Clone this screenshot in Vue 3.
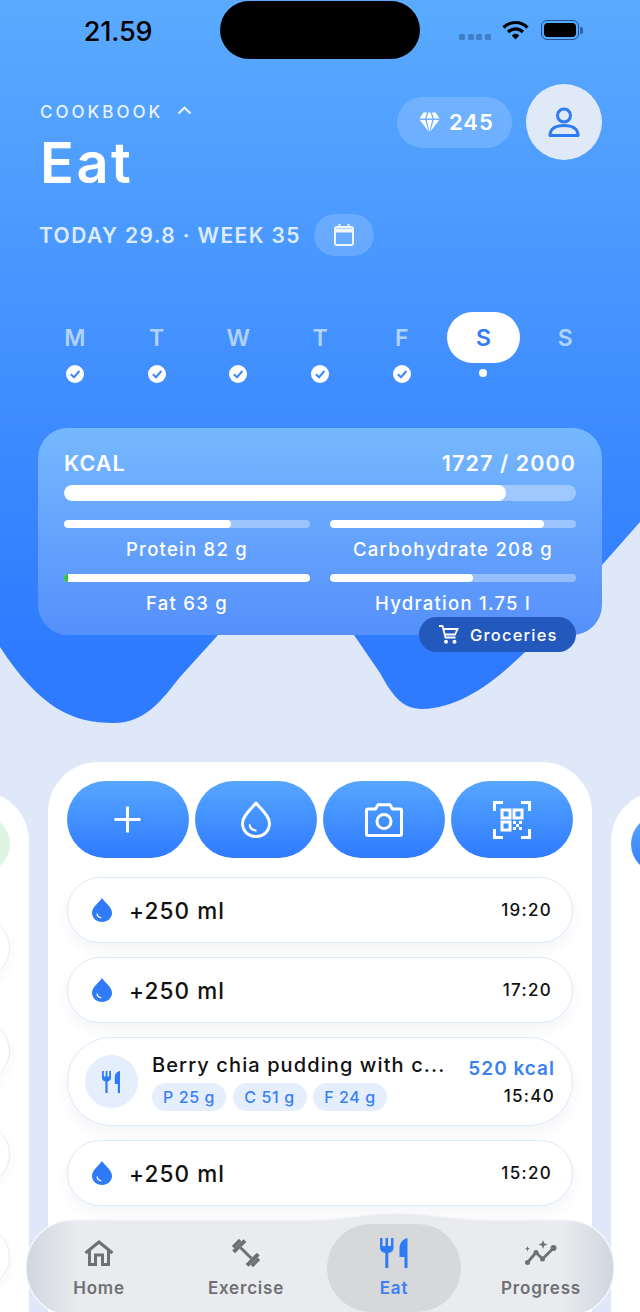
<script setup>
const days = [
  { label: 'M', done: true },
  { label: 'T', done: true },
  { label: 'W', done: true },
  { label: 'T', done: true },
  { label: 'F', done: true },
  { label: 'S', today: true },
  { label: 'S' },
]

const macros = [
  { label: 'Protein 82 g', pct: 68 },
  { label: 'Carbohydrate 208 g', pct: 87 },
  { label: 'Fat 63 g', pct: 100, over: true },
  { label: 'Hydration 1.75 l', pct: 58 },
]

const entries = [
  { type: 'water', time: '19:20' },
  { type: 'water', time: '17:20' },
  { type: 'food', title: 'Berry chia pudding with c...', kcal: '520 kcal', time: '15:40', chips: ['P 25 g', 'C 51 g', 'F 24 g'] },
  { type: 'water', time: '15:20' },
  { type: 'water', time: '13:20' },
]

const navItems = ['Home', 'Exercise', 'Eat', 'Progress']
</script>

<template>
  <div class="screen">
    <svg class="blob" width="640" height="730" viewBox="0 0 640 730">
      <defs>
        <linearGradient id="heroFill" x1="0" y1="0" x2="0" y2="1">
          <stop offset="0" stop-color="#5aaaff" />
          <stop offset="0.9" stop-color="#2e7bff" />
          <stop offset="1" stop-color="#2e7bff" />
        </linearGradient>
      </defs>
      <path
        fill="url(#heroFill)"
        d="M0 0H640V522L602 565L524 653C490 686 458 708 422 709C402 709 392 695 380 673L354 635H218L180 677C162 700 145 723 114 723C72 723 40 708 0 647Z"
      />
    </svg>

    <div class="status">
      <span class="clock">21.59</span>
      <div class="island"></div>
      <div class="status-right">
        <div class="signal"><i></i><i></i><i></i><i></i></div>
        <svg width="27" height="20" viewBox="0 0 27 20">
          <path d="M1.500 7.500C8.500 0.800 18.500 0.800 25.500 7.500" fill="none" stroke="#000" stroke-width="3.200" />
          <path d="M6 12C10.500 7.800 16.500 7.800 21 12" fill="none" stroke="#000" stroke-width="3.200" />
          <path d="M9.800 15.500C12 13.200 15 13.200 17.200 15.500L13.500 19.500Z" fill="#000" />
        </svg>
        <div class="battery"><div class="battery-in"></div></div>
        <div class="battery-nub"></div>
      </div>
    </div>

    <header class="top">
      <div class="top-left">
        <div class="crumb">
          <span>COOKBOOK</span>
          <svg width="15" height="9" viewBox="0 0 15 9">
            <path d="M1.500 7.500L7.500 1.800L13.500 7.500" fill="none" stroke="#e8f1ff" stroke-width="2.200" />
          </svg>
        </div>
        <h1>Eat</h1>
      </div>
      <div class="top-right">
        <div class="gems">
          <svg width="21" height="20" viewBox="0 0 21 20" fill="#fff">
            <path d="M4.500 0.500H8L6 6.500H0.500Z" />
            <path d="M9.500 0.500H11.500L13.500 6.500H7.500Z" />
            <path d="M13 0.500H16.500L20.500 6.500H15Z" />
            <path d="M0.800 8H6.200L9.700 19.500Z" />
            <path d="M7.800 8H13.200L10.500 19.800Z" />
            <path d="M14.800 8H20.200L11.300 19.500Z" />
          </svg>
          <span>245</span>
        </div>
        <div class="avatar">
          <svg width="32" height="31" viewBox="0 0 32 31" fill="none" stroke="#2f7bf6" stroke-width="3">
            <circle cx="16" cy="8.500" r="6.500" />
            <path d="M2 28.500C2 21.500 8 18.500 16 18.500C24 18.500 30 21.500 30 28.500Z" stroke-linejoin="round" />
          </svg>
        </div>
      </div>
    </header>

    <div class="date-row">
      <span>TODAY 29.8 · WEEK 35</span>
      <div class="cal-btn">
        <svg width="20" height="22" viewBox="0 0 20 22" fill="none" stroke="#f0f6ff" stroke-width="2">
          <rect x="1" y="3" width="18" height="18" rx="2" />
          <path d="M1 6.500H19" stroke-width="4" />
          <path d="M5.500 0V3M14.500 0V3" />
        </svg>
      </div>
    </div>

    <div class="week">
      <div v-for="(d, i) in days" :key="i" class="day">
        <div :class="['day-label', { today: d.today }]">{{ d.label }}</div>
        <svg v-if="d.done" class="day-check" width="18" height="18" viewBox="0 0 18 18">
          <circle cx="9" cy="9" r="9" fill="#fff" />
          <path d="M4.800 9.200L8 12.200L13.400 6" fill="none" stroke="#3d87f8" stroke-width="2" />
        </svg>
        <div v-if="d.today" class="day-dot"></div>
      </div>
    </div>

    <section class="summary">
      <div class="kcal-head">
        <span>KCAL</span>
        <span>1727 / 2000</span>
      </div>
      <div class="track big"><div class="fill" style="width: 86.400%"></div></div>
      <div class="macros">
        <div v-for="m in macros" :key="m.label" class="macro">
          <div class="track small">
            <div class="fill" :style="{ width: m.pct + '%' }"></div>
            <div v-if="m.over" class="over"></div>
          </div>
          <div class="macro-label">{{ m.label }}</div>
        </div>
      </div>
      <div class="groceries">
        <svg width="20" height="19" viewBox="0 0 20 19" fill="none" stroke="#fff" stroke-width="1.800">
          <path d="M0 1H3.500L6.500 12.500H16.500" />
          <path d="M4.300 4H18.500L16 9.500H6" />
          <circle cx="7" cy="16.800" r="1.100" fill="#fff" />
          <circle cx="15.500" cy="16.800" r="1.100" fill="#fff" />
        </svg>
        <span>Groceries</span>
      </div>
    </section>

    <div class="carousel">
      <div class="side-card left">
        <div class="side-btn green"></div>
        <div class="side-row"></div>
        <div class="side-row"></div>
        <div class="side-row"></div>
        <div class="side-row"></div>
      </div>

      <main class="card">
        <div class="actions">
          <button class="action">
            <svg width="27" height="27" viewBox="0 0 27 27" stroke="#fff" stroke-width="3">
              <path d="M0.500 13.500H26.500M13.500 0.500V26.500" />
            </svg>
          </button>
          <button class="action">
            <svg width="30" height="37" viewBox="0 0 30 37" fill="none" stroke="#fff" stroke-width="3">
              <path d="M15 2C20 8.500 28.500 14.500 28.500 22.500C28.500 30 22.500 35.500 15 35.500C7.500 35.500 1.500 30 1.500 22.500C1.500 14.500 10 8.500 15 2Z" stroke-linejoin="round" />
              <path d="M8.500 23.500C9 27 11.500 29.300 15.500 29.500" stroke-width="2" />
            </svg>
          </button>
          <button class="action">
            <svg width="38" height="34" viewBox="0 0 38 34" fill="none" stroke="#fff" stroke-width="3">
              <path d="M3 6H10.500L13 1.800H25L27.500 6H35C36 6 36.500 6.500 36.500 7.500V31C36.500 32 36 32.500 35 32.500H3C2 32.500 1.500 32 1.500 31V7.500C1.500 6.500 2 6 3 6Z" stroke-linejoin="round" />
              <circle cx="19" cy="18.500" r="7" />
            </svg>
          </button>
          <button class="action">
            <svg width="38" height="38" viewBox="0 0 38 38" fill="none" stroke="#fff" stroke-width="3">
              <path d="M1.500 10V1.500H10M28 1.500H36.500V10M1.500 28V36.500H10M28 36.500H36.500V28" />
              <rect x="9" y="9" width="8" height="8" />
              <rect x="21" y="9" width="8" height="8" />
              <rect x="9" y="21" width="8" height="8" />
              <path d="M20 20h3v3h-3zM26 20h3v3h-3zM23 23h3v3h-3zM20 26h3v3h-3zM26 26h3v3h-3z" fill="#fff" stroke="none" />
            </svg>
          </button>
        </div>

        <div class="entries">
          <div v-for="(e, i) in entries" :key="i" :class="['entry', e.type]">
            <template v-if="e.type === 'water'">
              <svg class="entry-drop" width="20" height="24" viewBox="0 0 20 24">
                <path d="M10 0C13 4.500 20 9 20 15C20 20 15.500 24 10 24C4.500 24 0 20 0 15C0 9 7 4.500 10 0Z" fill="#2f7bf6" />
                <path d="M5 15.500C5.300 18 6.800 19.500 9.300 19.800" fill="none" stroke="#fff" stroke-width="1.300" />
              </svg>
              <span class="entry-amount">+250 ml</span>
              <span class="entry-time">{{ e.time }}</span>
            </template>
            <template v-else>
              <div class="food-icon">
                <svg width="20" height="22" viewBox="0 0 20 22" fill="#2f7bf6">
                  <path d="M0 0H1.800V5.500H3.600V0H5.400V5.500H7.200V0H9V7C9 9 7.500 10 5.600 10.400V22H3.400V10.400C1.500 10 0 9 0 7Z" />
                  <path d="M18 0V22H15.800V13H12.800V6C12.800 3 15 0.500 18 0Z" />
                </svg>
              </div>
              <div class="food-main">
                <div class="food-title">{{ e.title }}</div>
                <div class="chips">
                  <span v-for="c in e.chips" :key="c" class="chip">{{ c }}</span>
                </div>
              </div>
              <div class="food-side">
                <span class="food-kcal">{{ e.kcal }}</span>
                <span class="food-time">{{ e.time }}</span>
              </div>
            </template>
          </div>
        </div>
      </main>

      <div class="side-card right">
        <div class="side-btn blue"></div>
      </div>
    </div>

    <nav class="tabbar">
      <svg class="tabbar-bg" width="590" height="104" viewBox="0 0 590 104">
        <defs>
          <linearGradient id="glass" x1="0" y1="0" x2="1" y2="0">
            <stop offset="0" stop-color="#cfd6e1" />
            <stop offset="0.09" stop-color="#e9ebee" />
            <stop offset="0.91" stop-color="#e9ebee" />
            <stop offset="1" stop-color="#cfd6e1" />
          </linearGradient>
        </defs>
        <path
          fill="url(#glass)"
          stroke="#f4f6f9"
          stroke-width="1.500"
          d="M50 8H290C320 8 340 1 372 1C405 1 425 8 465 8H540C568 8 589 28 589 56C589 84 568 104 540 104H50C22 104 1 84 1 56C1 28 22 8 50 8Z"
        />
      </svg>
      <div class="tab-pill"></div>
      <div v-for="n in navItems" :key="n" :class="['tab', { active: n === 'Eat' }]">
        <svg v-if="n === 'Home'" width="30" height="26" viewBox="0 0 30 26" fill="none" stroke="#6f7074" stroke-width="3">
          <path d="M1.500 13L15 2L28.500 13" />
          <path d="M5.500 10V24.500H11.500V15H18.500V24.500H24.500V10" />
        </svg>
        <svg v-else-if="n === 'Exercise'" width="30" height="30" viewBox="0 0 30 30" fill="#6f7074">
          <g transform="rotate(45 15 15)">
            <rect x="0" y="10" width="3.500" height="10" />
            <rect x="3.500" y="7" width="4" height="16" />
            <rect x="7.500" y="13.500" width="15" height="3" />
            <rect x="22.500" y="7" width="4" height="16" />
            <rect x="26.500" y="10" width="3.500" height="10" />
          </g>
        </svg>
        <svg v-else-if="n === 'Eat'" width="28" height="30" viewBox="0 0 28 30" fill="#2f7bf6">
          <path d="M0 0H2.500V8H5.500V0H8V8H11V0H13.500V10C13.500 13 11 14.500 8.300 15V30H5.300V15C2.500 14.500 0 13 0 10Z" />
          <path d="M27.500 0V30H24.500V19H19.500V10C19.500 5 23 0.800 27.500 0Z" />
        </svg>
        <svg v-else width="34" height="26" viewBox="0 0 34 26" fill="none" stroke="#6f7074" stroke-width="2.800">
          <path d="M3.500 22.500L12 12.500L18.500 19L29.500 8" stroke-linejoin="round" />
          <circle cx="3.500" cy="22.500" r="2.500" fill="#6f7074" stroke="none" />
          <circle cx="12" cy="12.500" r="2.500" fill="#6f7074" stroke="none" />
          <circle cx="18.500" cy="19" r="2.500" fill="#6f7074" stroke="none" />
          <circle cx="29.500" cy="8" r="3" fill="#6f7074" stroke="none" />
          <path d="M19 0L20.200 3.300L23.500 4.500L20.200 5.700L19 9L17.800 5.700L14.500 4.500L17.800 3.300Z" fill="#6f7074" stroke="none" />
          <path d="M3.500 6L4.200 8L6 8.700L4.200 9.400L3.500 11.400L2.800 9.400L1 8.700L2.800 8Z" fill="#6f7074" stroke="none" />
        </svg>
        <span>{{ n }}</span>
      </div>
    </nav>
  </div>
</template>

<style scoped>
.screen {
  position: relative;
  width: 640px;
  height: 1312px;
  overflow: hidden;
  background: #dfe8f8;
  font-family: Inter, 'Liberation Sans', sans-serif;
}

.blob {
  position: absolute;
  top: 0;
  left: 0;
}

.status,
.top,
.date-row,
.week,
.summary,
.carousel {
  position: relative;
}

.status {
  display: flex;
  align-items: center;
  height: 58px;
  padding-top: 1px;
}

.clock {
  width: 220px;
  padding-left: 16px;
  padding-top: 2px;
  box-sizing: border-box;
  text-align: center;
  font-size: 27px;
  font-weight: 500;
  letter-spacing: -0.200px;
  color: #000;
}

.island {
  width: 200px;
  height: 58px;
  border-radius: 29px;
  background: #000;
}

.status-right {
  display: flex;
  align-items: center;
  padding-left: 39px;
}

.signal {
  display: flex;
  gap: 2.500px;
  margin-top: 13px;
  margin-right: 11px;
}

.signal i {
  display: block;
  width: 6px;
  height: 6px;
  border-radius: 1.500px;
  background: #3f7fc8;
}

.battery {
  box-sizing: border-box;
  width: 38px;
  height: 20px;
  margin-left: 12px;
  padding: 2px;
  border: 1.500px solid #20508f;
  border-radius: 6px;
}

.battery-in {
  height: 100%;
  border-radius: 4px;
  background: #000;
}

.battery-nub {
  width: 3px;
  height: 7px;
  margin-left: 1px;
  border-radius: 0 2px 2px 0;
  background: #2f629f;
}

.top {
  display: flex;
  justify-content: space-between;
  height: 155px;
  padding: 41px 38px 0 40px;
  box-sizing: border-box;
}

.crumb {
  display: flex;
  align-items: center;
  gap: 14px;
  height: 24px;
  font-size: 17px;
  font-weight: 500;
  letter-spacing: 3px;
  color: #e8f1ff;
}

.crumb svg {
  margin-top: -4px;
}

h1 {
  margin: 8px 0 0;
  font-size: 56px;
  line-height: 62px;
  font-weight: 600;
  letter-spacing: 2.500px;
  color: #fff;
}

.top-right {
  display: flex;
  align-items: center;
  gap: 14px;
  height: 76px;
  margin-top: -16px;
}

.gems {
  display: flex;
  align-items: center;
  gap: 9px;
  width: 115px;
  height: 51px;
  padding-left: 22px;
  box-sizing: border-box;
  border-radius: 26px;
  background: rgba(255, 255, 255, 0.17);
  font-size: 22px;
  font-weight: 600;
  letter-spacing: 1px;
  color: #fff;
}

.avatar {
  display: flex;
  align-items: center;
  justify-content: center;
  width: 76px;
  height: 76px;
  border-radius: 50%;
  background: #e0e9f8;
}

.avatar svg {
  margin-top: 1px;
}

.date-row {
  display: flex;
  align-items: center;
  gap: 13px;
  height: 42px;
  padding-left: 39px;
  font-size: 21px;
  font-weight: 600;
  letter-spacing: 1.400px;
  color: #deebff;
}

.cal-btn {
  display: flex;
  align-items: center;
  justify-content: center;
  width: 60px;
  height: 42px;
  border-radius: 21px;
  background: rgba(255, 255, 255, 0.17);
}

.week {
  display: flex;
  width: 572px;
  height: 72px;
  margin: 56px 0 44px 34px;
}

.day {
  flex: 1;
  display: flex;
  flex-direction: column;
  align-items: center;
}

.day-label {
  width: 73px;
  height: 51px;
  line-height: 53px;
  text-align: center;
  font-size: 23px;
  font-weight: 600;
  color: rgba(255, 255, 255, 0.6);
}

.day-label.today {
  border-radius: 26px;
  background: #fff;
  color: #2f7bf6;
}

.day-check {
  margin-top: 2px;
}

.day-dot {
  width: 8px;
  height: 8px;
  margin-top: 6px;
  border-radius: 50%;
  background: #fff;
}

.summary {
  box-sizing: border-box;
  width: 564px;
  height: 207px;
  margin-left: 38px;
  padding: 20px 26px 0;
  border-radius: 30px;
  background: linear-gradient(180deg, #76b8ff, #5590fb);
}

.kcal-head {
  display: flex;
  justify-content: space-between;
  font-size: 21.500px;
  line-height: 30px;
  font-weight: 600;
  letter-spacing: 1.100px;
  color: #fff;
}

.track {
  position: relative;
  overflow: hidden;
  background: rgba(255, 255, 255, 0.35);
}

.track.big {
  height: 16px;
  margin-top: 7px;
  border-radius: 8px;
}

.track.small {
  height: 8px;
  border-radius: 4px;
}

.fill {
  height: 100%;
  border-radius: inherit;
  background: #fff;
}

.over {
  position: absolute;
  top: 0;
  left: 0;
  width: 4px;
  height: 100%;
  background: #2fc23e;
}

.macros {
  display: grid;
  grid-template-columns: 246px 246px;
  column-gap: 20px;
  margin-top: 19px;
}

.macro {
  height: 54px;
}

.macro-label {
  margin-top: 9px;
  text-align: center;
  font-size: 18.500px;
  line-height: 24px;
  font-weight: 500;
  letter-spacing: 1.250px;
  color: #fff;
  white-space: nowrap;
}

.groceries {
  position: absolute;
  right: 26px;
  bottom: -17px;
  display: flex;
  align-items: center;
  gap: 11px;
  box-sizing: border-box;
  width: 157px;
  height: 35px;
  padding-left: 20px;
  border-radius: 18px;
  background: #2358bd;
  font-size: 16.500px;
  font-weight: 500;
  letter-spacing: 1.200px;
  color: #fff;
}

.carousel {
  display: flex;
  justify-content: center;
  gap: 19px;
  width: 640px;
  margin-top: 127px;
}

.card,
.side-card {
  flex: none;
  box-sizing: border-box;
  width: 544px;
  height: 620px;
  border-radius: 50px;
  background: #fff;
}

.side-card {
  margin-top: 29px;
  padding-top: 24px;
}

.side-card.left {
  padding-left: 19px;
}

.side-btn {
  width: 506px;
  height: 58px;
  border-radius: 29px;
}

.side-btn.green {
  background: #dff3e3;
}

.side-btn.blue {
  background: linear-gradient(180deg, #59a8ff, #2f7bff);
  margin-left: 20px;
}

.side-row {
  box-sizing: border-box;
  width: 506px;
  height: 62px;
  margin-top: 41px;
  border: 1.500px solid #e3ecfb;
  border-radius: 31px;
  box-shadow: 0 6px 14px rgba(40, 60, 90, 0.04);
}

.side-btn + .side-row {
  margin-top: 44px;
}

.card {
  padding: 19px 19px 0;
}

.actions {
  display: grid;
  grid-template-columns: repeat(4, 1fr);
  gap: 6.500px;
}

.action {
  display: flex;
  align-items: center;
  justify-content: center;
  height: 77px;
  padding: 0;
  border: none;
  border-radius: 38.500px;
  background: linear-gradient(180deg, #57a6ff, #2f7bff);
}

.entries {
  display: flex;
  flex-direction: column;
  gap: 14px;
  margin-top: 19px;
}

.entry {
  display: flex;
  align-items: center;
  box-sizing: border-box;
  height: 66px;
  border: 1.500px solid #dce9fc;
  border-radius: 33px;
  background: #fff;
  box-shadow: 0 7px 14px rgba(40, 60, 90, 0.05);
}

.entry.water {
  padding: 0 20px 0 24px;
}

.entry.food {
  height: 89px;
  border-radius: 44px;
  padding: 0 17px;
}

.entry-drop {
  margin-right: 17px;
}

.entry-amount {
  flex: 1;
  font-size: 22.500px;
  font-weight: 500;
  letter-spacing: 1.100px;
  color: #111;
}

.entry-time,
.food-time {
  font-size: 17px;
  font-weight: 500;
  letter-spacing: 1.300px;
  color: #111;
}

.food-icon {
  flex: none;
  display: flex;
  align-items: center;
  justify-content: center;
  width: 53px;
  height: 53px;
  margin-right: 14px;
  border-radius: 50%;
  background: #e4eefd;
}

.food-main {
  flex: 1;
  min-width: 0;
}

.food-title {
  font-size: 20px;
  line-height: 26px;
  font-weight: 500;
  letter-spacing: 1.100px;
  color: #111;
  white-space: nowrap;
}

.chips {
  display: flex;
  gap: 6.500px;
  margin-top: 5px;
}

.chip {
  width: 74px;
  height: 28px;
  line-height: 28px;
  text-align: center;
  border-radius: 14px;
  background: #e4eefd;
  font-size: 16px;
  font-weight: 500;
  letter-spacing: 0.600px;
  color: #3a80f5;
}

.food-side {
  display: flex;
  flex-direction: column;
  align-items: flex-end;
  gap: 5px;
}

.food-kcal {
  font-size: 19px;
  line-height: 24px;
  font-weight: 600;
  letter-spacing: 1px;
  color: #3a80f5;
  white-space: nowrap;
}

.tabbar {
  position: absolute;
  left: 26px;
  bottom: -8px;
  display: flex;
  width: 588px;
  height: 108px;
}

.tabbar-bg {
  position: absolute;
  top: 0;
  left: -1px;
}

.tab-pill {
  position: absolute;
  top: 12px;
  left: 301px;
  width: 134px;
  height: 88px;
  border-radius: 44px;
  background: #d6d8da;
}

.tab {
  position: absolute;
  top: 26px;
  display: flex;
  flex-direction: column;
  align-items: center;
  width: 120px;
  height: 66px;
  font-size: 17px;
  font-weight: 600;
  letter-spacing: 0.800px;
  color: #6f7074;
}

.tab svg {
  height: 30px;
}

.tab span {
  margin-top: 9px;
  line-height: 22px;
}

.tab:nth-child(3) { left: 13px; }
.tab:nth-child(4) { left: 160px; }
.tab:nth-child(5) { left: 308px; }
.tab:nth-child(6) { left: 455px; }

.tab.active {
  color: #3a80f5;
}
</style>

<style>
html,
body {
  margin: 0;
  background: #dfe8f8;
}
</style>
